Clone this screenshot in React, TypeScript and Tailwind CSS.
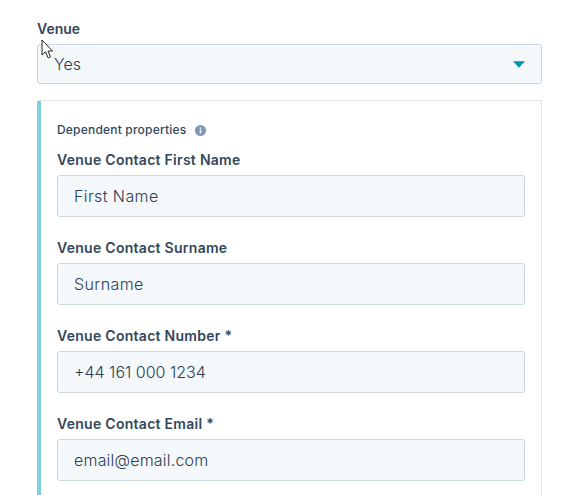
import React from 'react';

const fields = [
  { label: 'Venue Contact First Name', value: 'First Name', spacing: 'tracking-[0.4px]' },
  { label: 'Venue Contact Surname', value: 'Surname', spacing: 'tracking-[0.4px]' },
  { label: 'Venue Contact Number *', value: '+44 161 000 1234', spacing: 'tracking-[0px]' },
  { label: 'Venue Contact Email *', value: 'email@email.com', spacing: 'tracking-[0.2px]' },
];

export default function App() {
  return (
    <div className="relative h-[495px] w-[579px] overflow-hidden bg-white pl-[37px] pt-[20px] font-['Inter',sans-serif] text-[#33475b]">
      {/* Venue select */}
      <div className="w-[505px]">
        <div className="h-[24px] text-[14px] font-semibold leading-[18px]">Venue</div>
        <div className="flex h-[40px] items-center justify-between rounded-[3px] border border-[#cbd6e2] bg-[#f5f8fa] pl-[16px] pr-[16px] text-[16px] font-light text-[#2a3f55]">
          <span>Yes</span>
          <svg width="12" height="7" viewBox="0 0 12 7">
            <path d="M0.5 0.5h11L6 6.5z" fill="#0091ae" stroke="#0091ae" strokeWidth="0.5" strokeLinejoin="round" />
          </svg>
        </div>
      </div>

      {/* Dependent properties card */}
      <div className="mt-[16px] h-[420px] w-[505px] rounded-[3px] border border-l-4 border-[#dfe3eb] border-l-[#7fd1de] pl-[16px] pr-[16px] pt-[21px]">
        <div className="flex h-[16px] items-center gap-[9px] text-[12px] font-medium leading-[16px]">
          <span className="tracking-[0.2px]">Dependent properties</span>
          <svg width="11" height="11" viewBox="0 0 11 11">
            <circle cx="5.5" cy="5.5" r="5.5" fill="#7c98b6" />
            <rect x="4.7" y="4.6" width="1.6" height="3.8" fill="#fff" />
            <rect x="4.7" y="2.4" width="1.6" height="1.5" fill="#fff" />
          </svg>
        </div>
        <div className="mt-[13px] flex flex-col gap-[22px]">
          {fields.map((f) => (
            <div key={f.label}>
              <div className="h-[24px] text-[14px] font-semibold leading-[18px] tracking-[0.28px]">{f.label}</div>
              <div className={`flex h-[42px] items-center rounded-[3px] border border-[#cbd6e2] bg-[#f5f8fa] px-[16px] text-[16px] font-light text-[#2a3f55] ${f.spacing}`}>
                {f.value}
              </div>
            </div>
          ))}
        </div>
      </div>

      {/* Mouse cursor from the capture */}
      <svg className="absolute left-[41px] top-[39px]" width="14" height="21" viewBox="0 0 14 21">
        <path d="M1 1v15l3.5-3.2 2.6 6 2.4-1-2.6-5.8h4.6z" fill="#fff" stroke="#222" strokeWidth="1" />
      </svg>
    </div>
  );
}
